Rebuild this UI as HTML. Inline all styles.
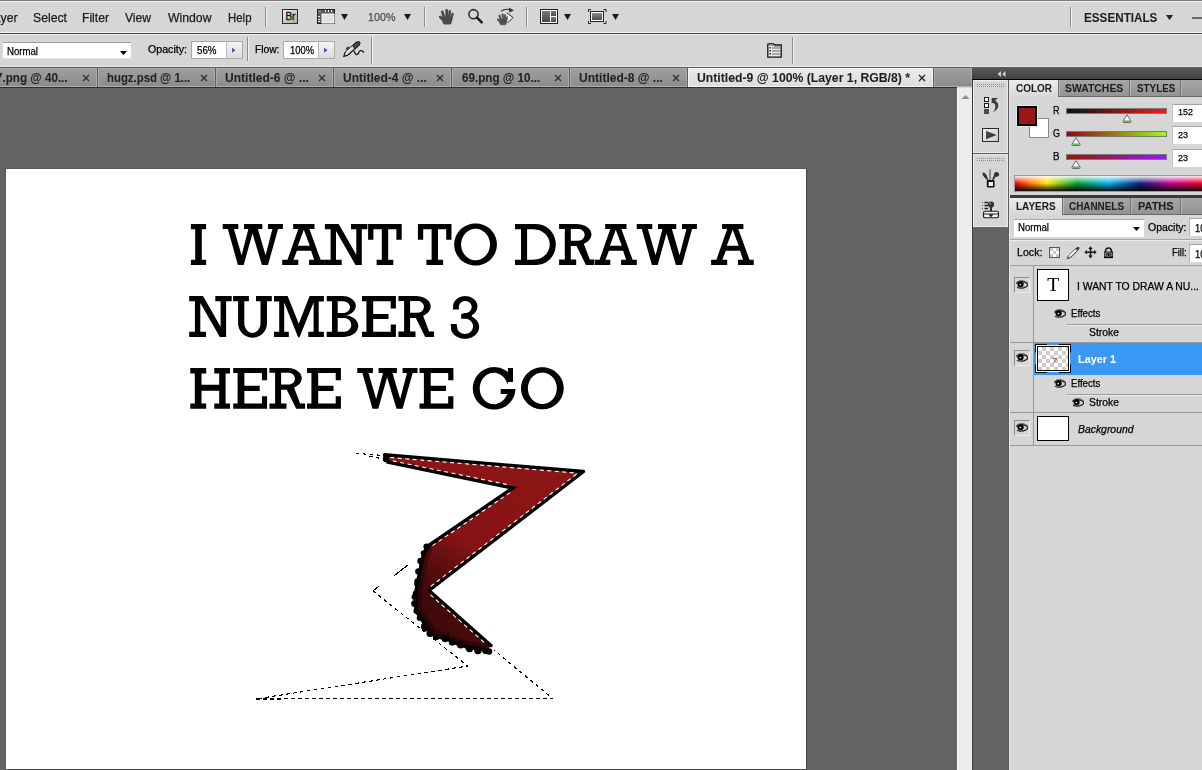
<!DOCTYPE html>
<html><head><meta charset="utf-8"><style>
html,body{margin:0;padding:0;}
body{width:1202px;height:770px;overflow:hidden;position:relative;background:#d6d6d6;}
body>div,body>span,body>svg{position:absolute;}
body>span{white-space:pre;transform-origin:0 0;-webkit-text-stroke:0.25px currentColor;}
body>span.b{-webkit-text-stroke:0.05px currentColor;}
</style></head><body>
<div style="left:0px;top:0px;width:1202px;height:1px;background:#7a7a7a"></div>
<div style="left:0px;top:1px;width:1202px;height:1px;background:#f0f0f0"></div>
<span style="left:-12.867624999999997px;top:11px;font:normal normal 13px/13px 'Liberation Sans', sans-serif;color:#1a1a1a;transform:scaleX(0.9400);">Layer</span>
<span style="left:33.3px;top:11px;font:normal normal 13px/13px 'Liberation Sans', sans-serif;color:#1a1a1a;transform:scaleX(0.9411);">Select</span>
<span style="left:82px;top:11px;font:normal normal 13px/13px 'Liberation Sans', sans-serif;color:#1a1a1a;transform:scaleX(0.9347);">Filter</span>
<span style="left:125px;top:11px;font:normal normal 13px/13px 'Liberation Sans', sans-serif;color:#1a1a1a;transform:scaleX(0.9305);">View</span>
<span style="left:167.5px;top:11px;font:normal normal 13px/13px 'Liberation Sans', sans-serif;color:#1a1a1a;transform:scaleX(0.9409);">Window</span>
<span style="left:227.5px;top:11px;font:normal normal 13px/13px 'Liberation Sans', sans-serif;color:#1a1a1a;transform:scaleX(0.8790);">Help</span>
<div style="left:265px;top:7px;width:1px;height:20px;background:#8c8c8c"></div>
<div style="left:266px;top:7px;width:1px;height:20px;background:#f2f2f2"></div>
<div style="left:424px;top:7px;width:1px;height:20px;background:#8c8c8c"></div>
<div style="left:425px;top:7px;width:1px;height:20px;background:#f2f2f2"></div>
<div style="left:526px;top:7px;width:1px;height:20px;background:#8c8c8c"></div>
<div style="left:527px;top:7px;width:1px;height:20px;background:#f2f2f2"></div>
<div style="left:1070px;top:7px;width:1px;height:20px;background:#8c8c8c"></div>
<div style="left:1071px;top:7px;width:1px;height:20px;background:#f2f2f2"></div>
<span style="left:367.9px;top:12px;font:normal normal 11.5px/11.5px 'Liberation Sans', sans-serif;color:#4d4d4d;transform:scaleX(0.9350);">100%</span>
<span class="b" style="left:1083.6px;top:11px;font:normal bold 13px/13px 'Liberation Sans', sans-serif;color:#1e1e1e;transform:scaleX(0.8993);">ESSENTIALS</span>
<svg style="left:341px;top:14px" width="7" height="6"><path d="M0 0H7L3.5 6Z" fill="#1a1a1a"/></svg>
<svg style="left:404px;top:14px" width="7" height="6"><path d="M0 0H7L3.5 6Z" fill="#1a1a1a"/></svg>
<svg style="left:564px;top:14px" width="7" height="6"><path d="M0 0H7L3.5 6Z" fill="#1a1a1a"/></svg>
<svg style="left:612px;top:14px" width="7" height="6"><path d="M0 0H7L3.5 6Z" fill="#1a1a1a"/></svg>
<svg style="left:1166px;top:15px" width="7" height="5"><path d="M0 0H7L3.5 5Z" fill="#222"/></svg>
<div style="left:1192px;top:17px;width:10px;height:2px;background:#6a6a6a"></div>
<div style="left:0px;top:32px;width:1202px;height:1px;background:#f0f0f0"></div>
<div style="left:0px;top:33px;width:1202px;height:1px;background:#4a4a4a"></div>
<div style="left:0px;top:34px;width:1202px;height:1px;background:#ececec"></div>
<div style="left:0px;top:35px;width:1202px;height:31px;background:#d6d6d6"></div>
<div style="left:3px;top:42px;width:128px;height:17px;background:#fff;border-top:1px solid #9a9a9a;border-bottom:1px solid #e4e4e4;box-sizing:border-box"></div>
<span style="left:6.75px;top:47px;font:normal normal 10px/10px 'Liberation Sans', sans-serif;color:#000;transform:scaleX(0.9620);">Normal</span>
<svg style="left:120px;top:51px" width="7" height="4"><path d="M0 0H7L3.5 4Z" fill="#000"/></svg>
<span style="left:148px;top:45px;font:normal normal 10px/10px 'Liberation Sans', sans-serif;color:#000;transform:scaleX(1.0633);">Opacity:</span>
<div style="left:191px;top:41px;width:52px;height:18px;background:#a9a9a9"></div>
<div style="left:192px;top:42px;width:34px;height:16px;background:#fff"></div>
<div style="left:226px;top:42px;width:16px;height:16px;background:linear-gradient(#f4f4f4,#dcdcdc);border-left:1px solid #b8b8b8;box-sizing:border-box"></div>
<svg style="left:231px;top:47px" width="6" height="7"><path d="M1 0.6L4.6 3.2L1 5.8Z" fill="#4a5ab8"/></svg>
<span style="left:197.1px;top:46px;font:normal normal 10px/10px 'Liberation Sans', sans-serif;color:#000;transform:scaleX(0.9743);">56%</span>
<div style="left:247px;top:37px;width:1px;height:24px;background:#8c8c8c"></div>
<div style="left:248px;top:37px;width:1px;height:24px;background:#f2f2f2"></div>
<span style="left:254.6px;top:45px;font:normal normal 10px/10px 'Liberation Sans', sans-serif;color:#000;transform:scaleX(1.0213);">Flow:</span>
<div style="left:283px;top:41px;width:52px;height:18px;background:#a9a9a9"></div>
<div style="left:284px;top:42px;width:34px;height:16px;background:#fff"></div>
<div style="left:318px;top:42px;width:16px;height:16px;background:linear-gradient(#f4f4f4,#dcdcdc);border-left:1px solid #b8b8b8;box-sizing:border-box"></div>
<svg style="left:323px;top:47px" width="6" height="7"><path d="M1 0.6L4.6 3.2L1 5.8Z" fill="#4a5ab8"/></svg>
<span style="left:289.5px;top:46px;font:normal normal 10px/10px 'Liberation Sans', sans-serif;color:#000;transform:scaleX(0.9384);">100%</span>
<div style="left:371px;top:37px;width:1px;height:27px;background:#8c8c8c"></div>
<div style="left:372px;top:37px;width:1px;height:27px;background:#f2f2f2"></div>
<div style="left:792px;top:37px;width:1px;height:27px;background:#8c8c8c"></div>
<div style="left:793px;top:37px;width:1px;height:27px;background:#f2f2f2"></div>
<div style="left:0px;top:66px;width:972px;height:1px;background:#e8e8e8"></div>
<div style="left:972px;top:66px;width:230px;height:1px;background:#e8e8e8"></div>
<div style="left:0px;top:67px;width:972px;height:1px;background:#5a5a5a"></div>
<div style="left:0px;top:68px;width:972px;height:19px;background:#5a5a5a"></div>
<div style="left:-20px;top:68px;width:117px;height:19px;background:linear-gradient(#9e9e9e,#8c8c8c);border:1px solid #acacac;box-sizing:border-box"></div>
<div style="left:98px;top:68px;width:117px;height:19px;background:linear-gradient(#9e9e9e,#8c8c8c);border:1px solid #acacac;box-sizing:border-box"></div>
<div style="left:216px;top:68px;width:117px;height:19px;background:linear-gradient(#9e9e9e,#8c8c8c);border:1px solid #acacac;box-sizing:border-box"></div>
<div style="left:334px;top:68px;width:117px;height:19px;background:linear-gradient(#9e9e9e,#8c8c8c);border:1px solid #acacac;box-sizing:border-box"></div>
<div style="left:452px;top:68px;width:117px;height:19px;background:linear-gradient(#9e9e9e,#8c8c8c);border:1px solid #acacac;box-sizing:border-box"></div>
<div style="left:570px;top:68px;width:117px;height:19px;background:linear-gradient(#9e9e9e,#8c8c8c);border:1px solid #acacac;box-sizing:border-box"></div>
<div style="left:934px;top:68px;width:38px;height:19px;background:linear-gradient(#9e9e9e,#8c8c8c);border:1px solid #acacac;box-sizing:border-box"></div>
<div style="left:0px;top:87px;width:957px;height:1px;background:#2e2e2e"></div>
<div style="left:0px;top:88px;width:957px;height:682px;background:#646464"></div>
<div style="left:6px;top:169px;width:800px;height:600px;background:#fff;box-shadow:0 0 0 1px rgba(0,0,0,.1),1px 1px 1px rgba(0,0,0,.2)"></div>
<div style="left:957px;top:88px;width:15px;height:682px;background:#ececec;border-left:1px solid #f8f8f8;box-sizing:border-box"></div>
<div style="left:972px;top:79px;width:37px;height:691px;background:#646464"></div>
<div style="left:972px;top:67px;width:230px;height:12px;background:linear-gradient(#5c5c5c,#404040)"></div>
<div style="left:972px;top:79px;width:230px;height:1px;background:#000"></div>
<div style="left:972px;top:80px;width:1px;height:690px;background:#3c3c3c"></div>
<div style="left:973px;top:80px;width:35px;height:73px;background:#d6d6d6;border:1px solid #ececec;box-sizing:border-box"></div>
<div style="left:973px;top:153px;width:35px;height:1px;background:#555"></div>
<div style="left:973px;top:154px;width:35px;height:73px;background:#d6d6d6;border:1px solid #ececec;box-sizing:border-box"></div>
<div style="left:1008px;top:80px;width:1px;height:690px;background:#5c5c5c"></div>
<div style="left:1009px;top:80px;width:193px;height:690px;background:#d6d6d6;border-left:1px solid #e6e6e6;box-sizing:border-box"></div>
<span class="b" style="left:-4.2px;top:72px;font:normal bold 12px/12px 'Liberation Sans', sans-serif;color:#222;transform:scaleX(0.9713);">7.png @ 40...</span>
<svg style="left:82px;top:74px" width="8" height="8"><path d="M1 1L7 7M7 1L1 7" stroke="#2e2e2e" stroke-width="1.25"/></svg>
<span class="b" style="left:107.3px;top:72px;font:normal bold 12px/12px 'Liberation Sans', sans-serif;color:#222;transform:scaleX(0.9487);">hugz.psd @ 1...</span>
<svg style="left:200px;top:74px" width="8" height="8"><path d="M1 1L7 7M7 1L1 7" stroke="#2e2e2e" stroke-width="1.25"/></svg>
<span class="b" style="left:225.3px;top:72px;font:normal bold 12px/12px 'Liberation Sans', sans-serif;color:#222;transform:scaleX(1.0023);">Untitled-6 @ ...</span>
<svg style="left:318px;top:74px" width="8" height="8"><path d="M1 1L7 7M7 1L1 7" stroke="#2e2e2e" stroke-width="1.25"/></svg>
<span class="b" style="left:343.4px;top:72px;font:normal bold 12px/12px 'Liberation Sans', sans-serif;color:#222;transform:scaleX(1.0023);">Untitled-4 @ ...</span>
<svg style="left:436px;top:74px" width="8" height="8"><path d="M1 1L7 7M7 1L1 7" stroke="#2e2e2e" stroke-width="1.25"/></svg>
<span class="b" style="left:461.5px;top:72px;font:normal bold 12px/12px 'Liberation Sans', sans-serif;color:#222;transform:scaleX(0.9728);">69.png @ 10...</span>
<svg style="left:554px;top:74px" width="8" height="8"><path d="M1 1L7 7M7 1L1 7" stroke="#2e2e2e" stroke-width="1.25"/></svg>
<span class="b" style="left:579.3px;top:72px;font:normal bold 12px/12px 'Liberation Sans', sans-serif;color:#222;transform:scaleX(1.0023);">Untitled-8 @ ...</span>
<svg style="left:672px;top:74px" width="8" height="8"><path d="M1 1L7 7M7 1L1 7" stroke="#2e2e2e" stroke-width="1.25"/></svg>
<div style="left:688px;top:68px;width:245px;height:19px;background:linear-gradient(#ebebeb,#dcdcdc);border:1px solid #f6f6f6;box-sizing:border-box"></div>
<span class="b" style="left:697.3px;top:72px;font:normal bold 12px/12px 'Liberation Sans', sans-serif;color:#1e1e1e;transform:scaleX(1.0187);">Untitled-9 @ 100% (Layer 1, RGB/8) *</span>
<svg style="left:918px;top:74px" width="8" height="8"><path d="M1 1L7 7M7 1L1 7" stroke="#1e1e1e" stroke-width="1.25"/></svg>
<svg style="left:282px;top:9px" width="16" height="15"><defs><linearGradient id="gbr" x1="0" y1="0" x2="1" y2="1"><stop offset="0" stop-color="#f0f0f0"/><stop offset="1" stop-color="#a8a8a8"/></linearGradient></defs>
<rect x="0.5" y="0.5" width="15" height="14" fill="url(#gbr)" stroke="#2a2a2a"/>
<text x="3.4" y="11" font-family="Liberation Sans" font-size="10" fill="#111" stroke="#111" stroke-width="0.3">Br</text></svg>
<svg style="left:317px;top:9px" width="18" height="15">
<rect x="0.5" y="0.5" width="17" height="14" fill="#e2e2e2" stroke="#1e1e1e"/>
<rect x="1" y="1" width="16" height="4" fill="#5a5a5a"/><rect x="1" y="1" width="4" height="13" fill="#5a5a5a"/>
<rect x="1" y="1" width="3" height="3" fill="#7a7a7a"/>
<rect x="5" y="5" width="12" height="9" fill="none" stroke="#fafafa" stroke-width="1"/>
<path d="M8.5 1v2M11.5 1v2M14.5 1v2M1 7.5h2M1 10.5h2M1 12.5h2" stroke="#eee" stroke-width="1"/></svg>
<svg style="left:439px;top:9px" width="16" height="16"><g fill="#4a4a4a" stroke="#4a4a4a"><g fill="none" stroke-linecap="round">
<path d="M3.3 2.8L5.2 9" stroke-width="2.6"/><path d="M7.6 1.3L7.8 9" stroke-width="2.7"/>
<path d="M10.8 2.4L10.2 9" stroke-width="2.6"/><path d="M13.6 4.8L12.2 10" stroke-width="2.3"/>
<path d="M1.2 8L4.6 11.2" stroke-width="2.6"/></g>
<path d="M3.6 8H13L12.6 12L11.6 15H5L3.4 12Z"/></g></svg>
<svg style="left:467px;top:8px" width="17" height="17"><circle cx="6.5" cy="6.2" r="4.6" fill="none" stroke="#2e2e2e" stroke-width="1.6"/>
<path d="M10 9.7L14.7 14.4" stroke="#1e1e1e" stroke-width="2.6" stroke-linecap="round"/></svg>
<svg style="left:496px;top:6px" width="19" height="20">
<path d="M11 7L17 11.5L11.5 17" fill="#f4f4f4" stroke="#222" stroke-width="1"/>
<path d="M5 5.2Q10 2 14.5 4.2" fill="none" stroke="#333" stroke-width="1.1"/><path d="M13 1.5L18 4.6L13.2 6.4Z" fill="#333"/>
<g transform="translate(1,7.5) scale(0.75)" fill="#505050" stroke="#505050"><g fill="none" stroke-linecap="round">
<path d="M3.3 2.8L5.2 9" stroke-width="2.6"/><path d="M7.6 1.3L7.8 9" stroke-width="2.7"/>
<path d="M10.8 2.4L10.2 9" stroke-width="2.6"/><path d="M13.6 4.8L12.2 10" stroke-width="2.3"/>
<path d="M1.2 8L4.6 11.2" stroke-width="2.6"/></g>
<path d="M3.6 8H13L12.6 12L11.6 15H5L3.4 12Z"/></g></svg>
<svg style="left:540px;top:9px" width="18" height="15"><defs><linearGradient id="gar" x1="0" y1="0" x2="0" y2="1"><stop offset="0" stop-color="#7a7a7a"/><stop offset="1" stop-color="#4a4a4a"/></linearGradient></defs>
<rect x="0.5" y="0.5" width="17" height="14" fill="#fafafa" stroke="#222"/>
<rect x="2" y="2" width="8" height="11" fill="url(#gar)"/><rect x="11" y="2" width="5" height="5" fill="url(#gar)"/><rect x="11" y="8" width="5" height="5" fill="url(#gar)"/></svg>
<svg style="left:588px;top:9px" width="19" height="15"><defs><linearGradient id="gsm" x1="0" y1="0" x2="0" y2="1"><stop offset="0" stop-color="#8a8a8a"/><stop offset="1" stop-color="#4e4e4e"/></linearGradient></defs>
<path d="M0.5 3V0.5H3M15.5 0.5H18V3M18 12V14.5H15.5M3 14.5H0.5V12" fill="none" stroke="#222" stroke-width="1"/>
<rect x="2.5" y="2.5" width="13" height="10" fill="#fafafa" stroke="#222"/><rect x="4" y="4" width="10" height="7" fill="url(#gsm)"/></svg>
<svg style="left:342px;top:40px" width="24" height="19">
<path d="M1.8 16.4L3 12.6L14.4 2.4L17.2 5L5.8 15.2Z" fill="#d4d4d4" stroke="#111" stroke-width="1.15"/>
<path d="M4 12.8L14.6 3.3" stroke="#fafafa" stroke-width="1.2"/>
<path d="M10.6 6.2L14.4 2.4Q16.4 0.8 17.8 2.2Q18.8 3.5 17.2 5L13.4 8.6Z" fill="#4a4a4a" stroke="#111" stroke-width="1"/>
<path d="M4.6 9.6Q4.8 7.6 7.2 7.4" fill="none" stroke="#333" stroke-width="1.8"/>
<path d="M12 11Q13.5 15 15 14.5Q16.5 14 17 12Q18.5 9.6 21 11.5L22 12.5" fill="none" stroke="#111" stroke-width="1.2"/></svg>
<svg style="left:767px;top:43px" width="15" height="15">
<path d="M0.8 14.2V1.6Q0.8 0.8 1.6 0.8H6.5L7.7 2H14.2V14.2Z" fill="#e8e8e8" stroke="#111" stroke-width="1.3"/>
<path d="M2 2.2H6.3L7.2 3.2H13.4" fill="none" stroke="#777" stroke-width="0.8"/>
<rect x="2.5" y="4" width="1.5" height="1.5" fill="#333"/><rect x="2.5" y="7" width="1.5" height="1.5" fill="#333"/><rect x="2.5" y="10" width="1.5" height="1.5" fill="#333"/>
<path d="M5 5H13M5 8H13M5 11H13" stroke="#666" stroke-width="1"/></svg>
<svg style="left:0;top:0" width="957" height="770"><path fill="#000" fill-rule="evenodd" d="M190.90,224.10 L206.10,224.10 L206.10,229.30 L201.80,229.30 L201.80,259.70 L206.10,259.70 L206.10,264.90 L190.90,264.90 L190.90,259.70 L195.20,259.70 L195.20,229.30 L190.90,229.30 Z M222.70,224.10 L238.30,224.10 L238.30,229.10 L233.90,229.10 L241.60,255.20 L248.40,229.10 L244.00,229.10 L244.00,224.10 L262.30,224.10 L262.30,229.10 L257.90,229.10 L265.60,255.20 L272.40,229.10 L268.00,229.10 L268.00,224.10 L282.90,224.10 L282.90,229.10 L278.10,229.10 L268.00,264.90 L261.90,264.90 L252.50,233.50 L243.70,264.90 L237.90,264.90 L227.80,229.10 L222.70,229.10 Z M293.20,224.10 L314.50,224.10 L314.50,229.00 L309.40,229.00 L320.60,259.70 L324.80,259.70 L324.80,264.90 L309.10,264.90 L309.10,259.70 L314.10,259.70 L311.10,250.80 L296.90,250.80 L293.50,259.70 L298.30,259.70 L298.30,264.90 L282.20,264.90 L282.20,259.70 L287.50,259.70 L298.30,229.00 L293.20,229.00 Z M303.80,229.70 L309.80,245.70 L297.90,245.70 Z M324.90,224.10 L338.70,224.10 L356.30,254.70 L356.30,229.30 L351.00,229.30 L351.00,224.10 L367.40,224.10 L367.40,229.30 L361.80,229.30 L361.80,264.90 L355.50,264.90 L336.00,231.00 L336.00,259.70 L341.70,259.70 L341.70,264.90 L324.90,264.90 L324.90,259.70 L330.60,259.70 L330.60,229.30 L324.90,229.30 Z M368.10,224.10 L401.70,224.10 L401.70,239.80 L396.40,239.80 L396.40,229.20 L388.20,229.20 L388.20,259.70 L393.30,259.70 L393.30,264.90 L376.60,264.90 L376.60,259.70 L381.80,259.70 L381.80,229.20 L373.40,229.20 L373.40,239.80 L368.10,239.80 Z M417.90,224.10 L451.50,224.10 L451.50,239.80 L446.20,239.80 L446.20,229.20 L438.00,229.20 L438.00,259.70 L443.10,259.70 L443.10,264.90 L426.40,264.90 L426.40,259.70 L431.60,259.70 L431.60,229.20 L423.20,229.20 L423.20,239.80 L417.90,239.80 Z M496.90,244.50 L496.82,246.33 L496.58,248.16 L496.17,249.95 L495.61,251.70 L494.90,253.40 L494.04,255.02 L493.04,256.57 L491.91,258.03 L490.65,259.38 L489.27,260.63 L487.80,261.74 L486.23,262.73 L484.57,263.58 L482.85,264.28 L481.08,264.83 L479.26,265.23 L477.41,265.47 L475.55,265.55 L473.69,265.47 L471.84,265.23 L470.02,264.83 L468.25,264.28 L466.53,263.58 L464.88,262.73 L463.30,261.74 L461.83,260.63 L460.45,259.38 L459.19,258.03 L458.06,256.57 L457.06,255.02 L456.20,253.40 L455.49,251.70 L454.93,249.95 L454.52,248.16 L454.28,246.33 L454.20,244.50 L454.28,242.67 L454.52,240.84 L454.93,239.05 L455.49,237.30 L456.20,235.60 L457.06,233.97 L458.06,232.43 L459.19,230.97 L460.45,229.62 L461.83,228.37 L463.30,227.26 L464.88,226.27 L466.53,225.42 L468.25,224.72 L470.02,224.17 L471.84,223.77 L473.69,223.53 L475.55,223.45 L477.41,223.53 L479.26,223.77 L481.08,224.17 L482.85,224.72 L484.57,225.42 L486.23,226.27 L487.80,227.26 L489.27,228.37 L490.65,229.62 L491.91,230.97 L493.04,232.43 L494.04,233.97 L494.90,235.60 L495.61,237.30 L496.17,239.05 L496.58,240.84 L496.82,242.67 Z M490.00,244.50 L489.95,245.87 L489.78,247.23 L489.51,248.56 L489.13,249.87 L488.65,251.14 L488.06,252.35 L487.39,253.51 L486.62,254.59 L485.77,255.60 L484.84,256.53 L483.84,257.36 L482.77,258.10 L481.66,258.73 L480.49,259.25 L479.29,259.67 L478.06,259.96 L476.81,260.14 L475.55,260.20 L474.29,260.14 L473.04,259.96 L471.81,259.67 L470.61,259.25 L469.44,258.73 L468.32,258.10 L467.26,257.36 L466.26,256.53 L465.33,255.60 L464.48,254.59 L463.71,253.51 L463.04,252.35 L462.45,251.14 L461.97,249.87 L461.59,248.56 L461.32,247.23 L461.15,245.87 L461.10,244.50 L461.15,243.13 L461.32,241.77 L461.59,240.44 L461.97,239.13 L462.45,237.86 L463.04,236.65 L463.71,235.49 L464.48,234.41 L465.33,233.40 L466.26,232.47 L467.26,231.64 L468.32,230.90 L469.44,230.27 L470.61,229.75 L471.81,229.33 L473.04,229.04 L474.29,228.86 L475.55,228.80 L476.81,228.86 L478.06,229.04 L479.29,229.33 L480.49,229.75 L481.66,230.27 L482.77,230.90 L483.84,231.64 L484.84,232.47 L485.77,233.40 L486.62,234.41 L487.39,235.49 L488.06,236.65 L488.65,237.86 L489.13,239.13 L489.51,240.44 L489.78,241.77 L489.95,243.13 Z M515.00,224.10 L536.30,224.10 L538.34,224.21 L540.35,224.55 L542.33,225.10 L544.23,225.86 L546.05,226.83 L547.76,228.00 L549.35,229.34 L550.79,230.85 L552.08,232.51 L553.19,234.30 L554.11,236.20 L554.85,238.20 L555.37,240.26 L555.69,242.37 L555.80,244.50 L555.69,246.63 L555.37,248.74 L554.85,250.80 L554.11,252.80 L553.19,254.70 L552.08,256.49 L550.79,258.15 L549.35,259.66 L547.76,261.00 L546.05,262.17 L544.23,263.14 L542.33,263.90 L540.35,264.45 L538.34,264.79 L536.30,264.90 L515.00,264.90 L515.00,259.70 L521.00,259.70 L521.00,229.30 L515.00,229.30 Z M527.10,229.30 L533.30,229.30 L535.01,229.38 L536.71,229.63 L538.37,230.04 L539.97,230.61 L541.50,231.34 L542.94,232.20 L544.27,233.20 L545.49,234.33 L546.57,235.57 L547.50,236.90 L548.28,238.32 L548.90,239.80 L549.34,241.34 L549.61,242.91 L549.70,244.50 L549.61,246.09 L549.34,247.66 L548.90,249.20 L548.28,250.68 L547.50,252.10 L546.57,253.43 L545.49,254.67 L544.27,255.80 L542.94,256.80 L541.50,257.66 L539.97,258.39 L538.37,258.96 L536.71,259.37 L535.01,259.62 L533.30,259.70 L527.10,259.70 Z M559.10,224.10 L577.10,224.10 L578.97,224.19 L580.80,224.45 L582.57,224.89 L584.25,225.49 L585.81,226.25 L587.21,227.15 L588.44,228.17 L589.48,229.30 L590.31,230.52 L590.91,231.81 L591.28,233.14 L591.40,234.50 L591.27,235.90 L590.88,237.28 L590.24,238.61 L589.36,239.86 L588.25,241.01 L586.94,242.04 L585.45,242.94 L583.81,243.68 L589.80,259.60 L594.80,259.60 L594.80,264.90 L585.90,264.90 L576.50,245.90 L570.80,245.90 L570.80,259.60 L576.20,259.60 L576.20,264.90 L559.10,264.90 L559.10,259.60 L564.80,259.60 L564.80,229.00 L559.10,229.00 Z M570.80,229.00 L578.40,229.00 L579.61,229.11 L580.77,229.45 L581.84,229.99 L582.78,230.71 L583.56,231.60 L584.13,232.61 L584.48,233.71 L584.60,234.85 L584.48,235.99 L584.13,237.09 L583.56,238.10 L582.78,238.99 L581.84,239.71 L580.77,240.25 L579.61,240.59 L578.40,240.70 L570.80,240.70 Z M605.20,224.10 L626.50,224.10 L626.50,229.00 L621.40,229.00 L632.60,259.70 L636.80,259.70 L636.80,264.90 L621.10,264.90 L621.10,259.70 L626.10,259.70 L623.10,250.80 L608.90,250.80 L605.50,259.70 L610.30,259.70 L610.30,264.90 L594.20,264.90 L594.20,259.70 L599.50,259.70 L610.30,229.00 L605.20,229.00 Z M615.80,229.70 L621.80,245.70 L609.90,245.70 Z M636.70,224.10 L652.30,224.10 L652.30,229.10 L647.90,229.10 L655.60,255.20 L662.40,229.10 L658.00,229.10 L658.00,224.10 L676.30,224.10 L676.30,229.10 L671.90,229.10 L679.60,255.20 L686.40,229.10 L682.00,229.10 L682.00,224.10 L696.90,224.10 L696.90,229.10 L692.10,229.10 L682.00,264.90 L675.90,264.90 L666.50,233.50 L657.70,264.90 L651.90,264.90 L641.80,229.10 L636.70,229.10 Z M722.10,224.10 L743.40,224.10 L743.40,229.00 L738.30,229.00 L749.50,259.70 L753.70,259.70 L753.70,264.90 L738.00,264.90 L738.00,259.70 L743.00,259.70 L740.00,250.80 L725.80,250.80 L722.40,259.70 L727.20,259.70 L727.20,264.90 L711.10,264.90 L711.10,259.70 L716.40,259.70 L727.20,229.00 L722.10,229.00 Z M732.70,229.70 L738.70,245.70 L726.80,245.70 Z M189.20,296.10 L203.00,296.10 L220.60,326.70 L220.60,301.30 L215.30,301.30 L215.30,296.10 L231.70,296.10 L231.70,301.30 L226.10,301.30 L226.10,336.90 L219.80,336.90 L200.30,303.00 L200.30,331.70 L206.00,331.70 L206.00,336.90 L189.20,336.90 L189.20,331.70 L194.90,331.70 L194.90,301.30 L189.20,301.30 Z M233.10,296.10 L248.90,296.10 L248.90,301.30 L244.30,301.30 L244.30,323.10 L244.40,324.63 L244.70,326.13 L245.18,327.55 L245.85,328.86 L246.67,330.03 L247.64,331.03 L248.72,331.83 L249.90,332.42 L251.13,332.78 L252.40,332.90 L253.67,332.78 L254.90,332.42 L256.08,331.83 L257.16,331.03 L258.13,330.03 L258.95,328.86 L259.62,327.55 L260.10,326.13 L260.40,324.63 L260.50,323.10 L260.50,301.30 L256.00,301.30 L256.00,296.10 L271.80,296.10 L271.80,301.30 L267.00,301.30 L267.00,323.10 L266.88,325.01 L266.51,326.88 L265.90,328.69 L265.06,330.40 L264.01,331.99 L262.77,333.42 L261.35,334.68 L259.77,335.74 L258.08,336.59 L256.29,337.20 L254.44,337.58 L252.55,337.70 L250.66,337.58 L248.81,337.20 L247.02,336.59 L245.32,335.74 L243.75,334.68 L242.33,333.42 L241.09,331.99 L240.04,330.40 L239.20,328.69 L238.59,326.88 L238.22,325.01 L238.10,323.10 L238.10,301.30 L233.10,301.30 Z M274.00,296.10 L287.60,296.10 L298.80,323.80 L309.60,296.10 L323.90,296.10 L323.90,301.60 L318.70,301.60 L318.70,331.70 L323.90,331.70 L323.90,336.90 L308.30,336.90 L308.30,331.70 L313.60,331.70 L313.60,302.60 L299.50,337.30 L298.10,337.30 L284.20,302.60 L284.20,331.70 L288.80,331.70 L288.80,336.90 L274.00,336.90 L274.00,331.70 L279.20,331.70 L279.20,301.60 L274.00,301.60 Z M326.70,296.10 L342.90,296.10 L344.92,296.22 L346.89,296.58 L348.76,297.17 L350.48,297.97 L352.02,298.97 L353.34,300.14 L354.39,301.45 L355.17,302.87 L355.64,304.37 L355.80,305.90 L355.64,307.43 L355.17,308.93 L354.39,310.35 L353.34,311.66 L352.02,312.83 L350.48,313.83 L348.76,314.63 L346.89,315.22 L344.92,315.58 L345.98,315.23 L348.21,315.63 L350.33,316.29 L352.28,317.18 L354.02,318.29 L355.51,319.59 L356.71,321.05 L357.59,322.63 L358.12,324.29 L358.30,326.00 L358.12,327.71 L357.59,329.37 L356.71,330.95 L355.51,332.41 L354.02,333.71 L352.28,334.82 L350.33,335.71 L348.21,336.37 L345.98,336.77 L343.70,336.90 L326.70,336.90 L326.70,331.70 L332.00,331.70 L332.00,301.30 L326.70,301.30 Z M337.70,301.30 L343.20,301.30 L344.53,301.41 L345.80,301.75 L346.98,302.29 L348.01,303.01 L348.85,303.90 L349.48,304.91 L349.87,306.01 L350.00,307.15 L349.87,308.29 L349.48,309.39 L348.85,310.40 L348.01,311.29 L346.98,312.01 L345.80,312.55 L344.53,312.89 L343.20,313.00 L337.70,313.00 Z M337.70,318.00 L344.20,318.00 L345.57,318.13 L346.88,318.52 L348.09,319.15 L349.15,320.01 L350.02,321.04 L350.67,322.23 L351.07,323.51 L351.20,324.85 L351.07,326.19 L350.67,327.47 L350.02,328.66 L349.15,329.69 L348.09,330.55 L346.88,331.18 L345.57,331.57 L344.20,331.70 L337.70,331.70 Z M362.00,296.10 L395.90,296.10 L395.90,308.50 L390.70,308.50 L390.70,301.30 L373.20,301.30 L373.20,313.90 L388.50,313.90 L388.50,319.10 L373.20,319.10 L373.20,331.70 L390.70,331.70 L390.70,324.50 L395.90,324.50 L395.90,336.90 L362.00,336.90 L362.00,331.70 L366.40,331.70 L366.40,301.30 L362.00,301.30 Z M398.40,296.10 L416.40,296.10 L418.27,296.19 L420.10,296.45 L421.87,296.89 L423.55,297.49 L425.11,298.25 L426.51,299.15 L427.74,300.17 L428.78,301.30 L429.61,302.52 L430.21,303.81 L430.58,305.14 L430.70,306.50 L430.57,307.90 L430.18,309.28 L429.54,310.61 L428.66,311.86 L427.55,313.01 L426.24,314.04 L424.75,314.94 L423.11,315.68 L429.10,331.60 L434.10,331.60 L434.10,336.90 L425.20,336.90 L415.80,317.90 L410.10,317.90 L410.10,331.60 L415.50,331.60 L415.50,336.90 L398.40,336.90 L398.40,331.60 L404.10,331.60 L404.10,301.00 L398.40,301.00 Z M410.10,301.00 L417.70,301.00 L418.91,301.11 L420.07,301.45 L421.14,301.99 L422.08,302.71 L422.86,303.60 L423.43,304.61 L423.78,305.71 L423.90,306.85 L423.78,307.99 L423.43,309.09 L422.86,310.10 L422.08,310.99 L421.14,311.71 L420.07,312.25 L418.91,312.59 L417.70,312.70 L410.10,312.70 Z M453.00,309.60 L453.06,306.75 L453.08,305.65 L453.24,304.57 L453.54,303.51 L453.97,302.48 L454.52,301.49 L455.20,300.56 L455.99,299.70 L456.88,298.91 L457.87,298.20 L458.93,297.59 L460.07,297.07 L461.27,296.66 L462.52,296.36 L463.79,296.17 L465.08,296.10 L466.37,296.14 L467.65,296.30 L468.90,296.57 L470.11,296.95 L471.27,297.44 L472.36,298.03 L473.37,298.71 L474.29,299.48 L475.10,300.33 L475.81,301.24 L476.40,302.21 L476.86,303.23 L477.19,304.29 L477.39,305.37 L477.45,306.46 L477.37,307.55 L477.16,308.62 L476.82,309.68 L476.34,310.69 L475.74,311.66 L475.02,312.57 L474.19,313.40 L473.27,314.16 L472.25,314.84 L471.57,316.58 L472.67,317.12 L473.70,317.74 L474.67,318.44 L475.56,319.20 L476.36,320.03 L477.07,320.91 L477.68,321.85 L478.18,322.82 L478.58,323.83 L478.87,324.87 L479.04,325.92 L479.10,326.98 L479.04,328.04 L478.87,329.10 L478.59,330.13 L478.20,331.14 L477.69,332.12 L477.09,333.05 L476.38,333.94 L475.59,334.77 L474.70,335.54 L473.74,336.23 L472.70,336.86 L471.61,337.40 L470.45,337.86 L469.26,338.23 L468.02,338.51 L466.76,338.70 L465.49,338.79 L464.21,338.79 L462.94,338.69 L461.68,338.49 L460.45,338.21 L459.26,337.83 L458.11,337.36 L457.02,336.81 L455.99,336.19 L455.03,335.48 L454.15,334.71 L453.36,333.88 L452.66,332.98 L452.06,332.05 L451.57,331.07 L451.18,330.05 L450.70,324.10 L456.60,324.10 L457.64,329.66 L458.07,330.38 L458.58,331.06 L459.17,331.67 L459.83,332.23 L460.55,332.71 L461.32,333.12 L462.13,333.44 L462.97,333.68 L463.84,333.83 L464.72,333.90 L465.61,333.87 L466.48,333.75 L467.34,333.55 L468.16,333.26 L468.95,332.88 L469.69,332.43 L470.37,331.90 L470.99,331.31 L471.54,330.66 L472.00,329.96 L472.38,329.21 L472.68,328.43 L472.88,327.62 L472.98,326.80 L472.99,325.97 L472.91,325.14 L472.72,324.33 L472.45,323.55 L472.08,322.79 L471.63,322.08 L471.10,321.41 L470.50,320.81 L469.83,320.27 L469.10,319.80 L468.32,319.41 L467.50,319.10 L466.65,318.88 L465.78,318.75 L464.90,318.70 L461.20,318.70 L461.20,314.00 L464.92,312.99 L465.70,312.99 L466.47,312.89 L467.23,312.71 L467.95,312.44 L468.64,312.09 L469.28,311.66 L469.85,311.17 L470.36,310.61 L470.79,310.00 L471.14,309.34 L471.40,308.65 L471.57,307.94 L471.65,307.21 L471.63,306.48 L471.51,305.75 L471.30,305.05 L471.00,304.37 L470.62,303.73 L470.15,303.14 L469.61,302.61 L469.01,302.15 L468.35,301.75 L467.65,301.44 L466.91,301.20 L466.14,301.06 L465.36,301.00 L464.58,301.03 L463.81,301.15 L463.06,301.36 L462.34,301.65 L461.67,302.03 L461.05,302.47 L460.49,302.99 L460.01,303.56 L459.60,304.18 L459.28,304.85 L459.04,305.55 L458.90,306.27 L458.85,307.00 L458.90,309.60 Z M190.30,367.90 L206.20,367.90 L206.20,373.40 L201.50,373.40 L201.50,384.70 L219.20,384.70 L219.20,373.40 L214.30,373.40 L214.30,367.90 L230.00,367.90 L230.00,373.40 L225.60,373.40 L225.60,403.50 L230.00,403.50 L230.00,408.70 L214.30,408.70 L214.30,403.50 L219.20,403.50 L219.20,390.70 L201.50,390.70 L201.50,403.50 L206.20,403.50 L206.20,408.70 L190.30,408.70 L190.30,403.50 L194.80,403.50 L194.80,373.40 L190.30,373.40 Z M233.20,367.90 L267.10,367.90 L267.10,380.30 L261.90,380.30 L261.90,373.10 L244.40,373.10 L244.40,385.70 L259.70,385.70 L259.70,390.90 L244.40,390.90 L244.40,403.50 L261.90,403.50 L261.90,396.30 L267.10,396.30 L267.10,408.70 L233.20,408.70 L233.20,403.50 L237.60,403.50 L237.60,373.10 L233.20,373.10 Z M269.40,367.90 L287.40,367.90 L289.27,367.99 L291.10,368.25 L292.87,368.69 L294.55,369.29 L296.11,370.05 L297.51,370.95 L298.74,371.97 L299.78,373.10 L300.61,374.32 L301.21,375.61 L301.58,376.94 L301.70,378.30 L301.57,379.70 L301.18,381.08 L300.54,382.41 L299.66,383.66 L298.55,384.81 L297.24,385.84 L295.75,386.74 L294.11,387.48 L300.10,403.40 L305.10,403.40 L305.10,408.70 L296.20,408.70 L286.80,389.70 L281.10,389.70 L281.10,403.40 L286.50,403.40 L286.50,408.70 L269.40,408.70 L269.40,403.40 L275.10,403.40 L275.10,372.80 L269.40,372.80 Z M281.10,372.80 L288.70,372.80 L289.91,372.91 L291.07,373.25 L292.14,373.79 L293.08,374.51 L293.86,375.40 L294.43,376.41 L294.78,377.51 L294.90,378.65 L294.78,379.79 L294.43,380.89 L293.86,381.90 L293.08,382.79 L292.14,383.51 L291.07,384.05 L289.91,384.39 L288.70,384.50 L281.10,384.50 Z M307.00,367.90 L340.90,367.90 L340.90,380.30 L335.70,380.30 L335.70,373.10 L318.20,373.10 L318.20,385.70 L333.50,385.70 L333.50,390.90 L318.20,390.90 L318.20,403.50 L335.70,403.50 L335.70,396.30 L340.90,396.30 L340.90,408.70 L307.00,408.70 L307.00,403.50 L311.40,403.50 L311.40,373.10 L307.00,373.10 Z M357.30,367.90 L372.90,367.90 L372.90,372.90 L368.50,372.90 L376.20,399.00 L383.00,372.90 L378.60,372.90 L378.60,367.90 L396.90,367.90 L396.90,372.90 L392.50,372.90 L400.20,399.00 L407.00,372.90 L402.60,372.90 L402.60,367.90 L417.50,367.90 L417.50,372.90 L412.70,372.90 L402.60,408.70 L396.50,408.70 L387.10,377.30 L378.30,408.70 L372.50,408.70 L362.40,372.90 L357.30,372.90 Z M419.50,367.90 L453.40,367.90 L453.40,380.30 L448.20,380.30 L448.20,373.10 L430.70,373.10 L430.70,385.70 L446.00,385.70 L446.00,390.90 L430.70,390.90 L430.70,403.50 L448.20,403.50 L448.20,396.30 L453.40,396.30 L453.40,408.70 L419.50,408.70 L419.50,403.50 L423.90,403.50 L423.90,373.10 L419.50,373.10 Z M507.90,372.09 L506.45,370.98 L504.91,370.00 L503.29,369.15 L501.60,368.44 L499.86,367.87 L498.08,367.46 L496.26,367.20 L494.44,367.10 L492.60,367.16 L490.79,367.37 L488.99,367.73 L487.24,368.25 L485.53,368.91 L483.89,369.72 L482.32,370.66 L480.84,371.73 L479.46,372.93 L478.19,374.24 L477.03,375.65 L476.00,377.16 L475.10,378.75 L474.35,380.41 L473.74,382.13 L473.28,383.89 L472.97,385.69 L472.82,387.50 L472.82,389.33 L472.99,391.14 L473.30,392.94 L473.78,394.70 L474.40,396.41 L475.16,398.07 L476.07,399.65 L477.11,401.15 L478.27,402.56 L479.56,403.86 L480.95,405.05 L482.43,406.11 L484.00,407.05 L485.65,407.84 L487.36,408.50 L489.12,409.00 L490.92,409.35 L492.74,409.55 L494.57,409.60 L496.40,409.48 L498.21,409.21 L499.99,408.79 L501.73,408.22 L503.41,407.50 L505.02,406.64 L506.56,405.64 L508.00,404.52 L509.34,403.28 L510.57,401.93 L511.68,400.48 L512.66,398.94 L513.50,397.32 L514.21,395.64 L514.76,393.90 L515.50,389.00 L500.70,389.00 L500.70,394.10 L507.80,394.10 L506.52,395.17 L505.90,396.48 L505.17,397.72 L504.34,398.89 L503.41,399.95 L502.40,400.92 L501.31,401.77 L500.15,402.51 L498.94,403.11 L497.68,403.59 L496.38,403.93 L495.06,404.14 L493.73,404.20 L492.40,404.12 L491.09,403.90 L489.79,403.55 L488.54,403.06 L487.33,402.44 L486.18,401.69 L485.10,400.82 L484.09,399.85 L483.17,398.77 L482.35,397.60 L481.63,396.35 L481.02,395.03 L480.53,393.65 L480.15,392.22 L479.90,390.76 L479.77,389.28 L479.76,387.79 L479.89,386.31 L480.13,384.85 L480.50,383.42 L480.99,382.04 L481.60,380.72 L482.31,379.46 L483.13,378.29 L484.04,377.20 L485.04,376.22 L486.12,375.35 L487.27,374.60 L488.48,373.97 L489.73,373.47 L491.02,373.11 L492.34,372.89 L493.66,372.80 L494.99,372.86 L496.31,373.05 L497.61,373.39 L498.87,373.86 L500.09,374.46 L501.25,375.19 L502.34,376.04 L503.36,377.00 L504.29,378.06 L505.13,379.21 L505.86,380.45 L506.49,381.77 L507.01,383.14 L507.40,384.56 L507.90,381.90 L513.00,381.90 L513.00,368.00 L507.90,368.00 Z M563.70,388.30 L563.62,390.13 L563.38,391.96 L562.97,393.75 L562.41,395.50 L561.70,397.20 L560.84,398.82 L559.84,400.37 L558.71,401.83 L557.45,403.18 L556.07,404.43 L554.60,405.54 L553.02,406.53 L551.37,407.38 L549.65,408.08 L547.88,408.63 L546.06,409.03 L544.21,409.27 L542.35,409.35 L540.49,409.27 L538.64,409.03 L536.82,408.63 L535.05,408.08 L533.33,407.38 L531.67,406.53 L530.10,405.54 L528.63,404.43 L527.25,403.18 L525.99,401.83 L524.86,400.37 L523.86,398.82 L523.00,397.20 L522.29,395.50 L521.73,393.75 L521.32,391.96 L521.08,390.13 L521.00,388.30 L521.08,386.47 L521.32,384.64 L521.73,382.85 L522.29,381.10 L523.00,379.40 L523.86,377.77 L524.86,376.23 L525.99,374.77 L527.25,373.42 L528.63,372.17 L530.10,371.06 L531.67,370.07 L533.33,369.22 L535.05,368.52 L536.82,367.97 L538.64,367.57 L540.49,367.33 L542.35,367.25 L544.21,367.33 L546.06,367.57 L547.88,367.97 L549.65,368.52 L551.37,369.22 L553.02,370.07 L554.60,371.06 L556.07,372.17 L557.45,373.42 L558.71,374.77 L559.84,376.23 L560.84,377.77 L561.70,379.40 L562.41,381.10 L562.97,382.85 L563.38,384.64 L563.62,386.47 Z M556.80,388.30 L556.75,389.67 L556.58,391.03 L556.31,392.36 L555.93,393.67 L555.45,394.94 L554.86,396.15 L554.19,397.31 L553.42,398.39 L552.57,399.40 L551.64,400.33 L550.64,401.16 L549.58,401.90 L548.46,402.53 L547.29,403.05 L546.09,403.47 L544.86,403.76 L543.61,403.94 L542.35,404.00 L541.09,403.94 L539.84,403.76 L538.61,403.47 L537.41,403.05 L536.24,402.53 L535.12,401.90 L534.06,401.16 L533.06,400.33 L532.13,399.40 L531.28,398.39 L530.51,397.31 L529.84,396.15 L529.25,394.94 L528.77,393.67 L528.39,392.36 L528.12,391.03 L527.95,389.67 L527.90,388.30 L527.95,386.93 L528.12,385.57 L528.39,384.24 L528.77,382.93 L529.25,381.66 L529.84,380.45 L530.51,379.29 L531.28,378.21 L532.13,377.20 L533.06,376.27 L534.06,375.44 L535.12,374.70 L536.24,374.07 L537.41,373.55 L538.61,373.13 L539.84,372.84 L541.09,372.66 L542.35,372.60 L543.61,372.66 L544.86,372.84 L546.09,373.13 L547.29,373.55 L548.46,374.07 L549.58,374.70 L550.64,375.44 L551.64,376.27 L552.57,377.20 L553.42,378.21 L554.19,379.29 L554.86,380.45 L555.45,381.66 L555.93,382.93 L556.31,384.24 L556.58,385.57 L556.75,386.93 Z"/></svg>
<svg style="left:0;top:0" width="957" height="770">
<defs><linearGradient id="gred" x1="470" y1="470" x2="430" y2="650" gradientUnits="userSpaceOnUse">
<stop offset="0" stop-color="#8c1515"/><stop offset="0.4" stop-color="#861414"/><stop offset="0.58" stop-color="#6e1111"/><stop offset="0.75" stop-color="#4e0c0c"/><stop offset="1" stop-color="#420a0a"/></linearGradient>
<radialGradient id="gdark" cx="420" cy="590" r="70" gradientUnits="userSpaceOnUse"><stop offset="0" stop-color="#2a0505" stop-opacity="0.55"/><stop offset="1" stop-color="#2a0505" stop-opacity="0"/></radialGradient></defs>
<path d="M384.5,454.8 L583.5,471.5 L429.0,590.5 L491.0,645.0 L488.0,650.0 L486.0,650.0 L479.0,649.0 L470.0,647.5 L461.0,645.0 L453.0,642.0 L446.0,638.5 L438.0,637.0 L431.0,633.0 L426.0,626.0 L421.0,618.0 L416.0,611.0 L415.5,602.0 L416.0,592.0 L417.5,582.0 L420.0,572.0 L421.5,562.0 L424.0,553.0 L428.0,546.0 L513.0,487.5 L387.0,461.5Z" fill="url(#gred)"/>
<path d="M384.5,454.8 L583.5,471.5 L429.0,590.5 L491.0,645.0 L488.0,650.0 L486.0,650.0 L479.0,649.0 L470.0,647.5 L461.0,645.0 L453.0,642.0 L446.0,638.5 L438.0,637.0 L431.0,633.0 L426.0,626.0 L421.0,618.0 L416.0,611.0 L415.5,602.0 L416.0,592.0 L417.5,582.0 L420.0,572.0 L421.5,562.0 L424.0,553.0 L428.0,546.0 L513.0,487.5 L387.0,461.5Z" fill="url(#gdark)"/>
<clipPath id="cshape"><path d="M384.5,454.8 L583.5,471.5 L429.0,590.5 L491.0,645.0 L488.0,650.0 L486.0,650.0 L479.0,649.0 L470.0,647.5 L461.0,645.0 L453.0,642.0 L446.0,638.5 L438.0,637.0 L431.0,633.0 L426.0,626.0 L421.0,618.0 L416.0,611.0 L415.5,602.0 L416.0,592.0 L417.5,582.0 L420.0,572.0 L421.5,562.0 L424.0,553.0 L428.0,546.0 L513.0,487.5 L387.0,461.5Z"/></clipPath>
<path d="M428.0,546.0 L424.0,553.0 L421.5,562.0 L420.0,572.0 L417.5,582.0 L416.0,592.0 L415.5,602.0 L416.0,611.0 L421.0,618.0 L426.0,626.0 L431.0,633.0 L438.0,637.0 L446.0,638.5 L453.0,642.0 L461.0,645.0 L470.0,647.5 L479.0,649.0 L486.0,650.0" fill="none" stroke="#1a0303" stroke-opacity="0.45" stroke-width="12" clip-path="url(#cshape)"/>
<path d="M386 458.5L384.5 454.8L583.5 471.5L429 590.5L491 645.5" fill="none" stroke="#000" stroke-width="3.4" stroke-linejoin="round" stroke-linecap="round"/>
<path d="M386.5 461.8L513 488L428 546" fill="none" stroke="#000" stroke-width="3.6" stroke-linejoin="miter"/>
<path d="M428.0,546.0 L424.0,553.0 L421.5,562.0 L420.0,572.0 L417.5,582.0 L416.0,592.0 L415.5,602.0 L416.0,611.0 L421.0,618.0 L426.0,626.0 L431.0,633.0 L438.0,637.0 L446.0,638.5 L453.0,642.0 L461.0,645.0 L470.0,647.5 L479.0,649.0 L486.0,650.0" fill="none" stroke="#000" stroke-width="3.6" stroke-linejoin="round"/>
<g fill="#060000"><circle cx="426.6" cy="546.7" r="3.2"/><circle cx="423.5" cy="553.1" r="2.8"/><circle cx="420.9" cy="561.4" r="2.8"/><circle cx="418.5" cy="571.5" r="3.3"/><circle cx="417.6" cy="581.6" r="3.3"/><circle cx="415.7" cy="593.4" r="3.0"/><circle cx="414.7" cy="603.4" r="3.5"/><circle cx="416.2" cy="610.9" r="2.8"/><circle cx="419.6" cy="618.0" r="2.9"/><circle cx="424.7" cy="626.6" r="3.8"/><circle cx="430.1" cy="633.5" r="3.6"/><circle cx="436.4" cy="636.8" r="2.8"/><circle cx="445.2" cy="638.5" r="3.7"/><circle cx="452.3" cy="642.0" r="3.5"/><circle cx="460.8" cy="644.8" r="3.8"/><circle cx="469.5" cy="648.7" r="3.5"/><circle cx="477.9" cy="650.5" r="3.7"/><circle cx="485.2" cy="651.0" r="2.9"/><circle cx="489" cy="651.5" r="3.3"/><circle cx="386" cy="459" r="3.2"/><circle cx="420.5" cy="561" r="3.2"/><circle cx="425.5" cy="628" r="3.4"/><circle cx="414.5" cy="597" r="3"/><circle cx="436" cy="637" r="3.2"/><circle cx="452" cy="642.5" r="3"/><circle cx="468" cy="647" r="3.1"/><circle cx="417" cy="584" r="2.8"/></g>
<g fill="none" stroke="#fff" stroke-width="1.1" stroke-dasharray="4 3.5">
<path d="M390.3 457.5L575.3 473.0"/><path d="M576.6 474.0L430.8 586.3"/><path d="M430.5 594.8L485.8 643.8"/><path d="M392.8 460.9L508.6 484.8"/><path d="M510.1 492.6L430.9 546.7"/>
</g>
<g fill="none" stroke="#000" stroke-width="1.1" stroke-dasharray="3.5 3.5" shape-rendering="crispEdges">
<path d="M356 453.3L383 455.5"/><path d="M369 456.5L383 458.7"/>
<path d="M373 591L467.7 666L255.6 699L552.6 698.5L494 650"/>
</g>
<g fill="none" stroke="#000" stroke-width="1.1" shape-rendering="crispEdges"><path d="M394.2 575.6L407.8 565.1"/><path d="M379 586.1L373 591"/></g>
</svg>
<svg style="left:977px;top:84px" width="28" height="3"><g fill="#8a8a8a"><rect x="0" y="0" width="1" height="1"/><rect x="0" y="2" width="1" height="1"/><rect x="2" y="0" width="1" height="1"/><rect x="2" y="2" width="1" height="1"/><rect x="4" y="0" width="1" height="1"/><rect x="4" y="2" width="1" height="1"/><rect x="6" y="0" width="1" height="1"/><rect x="6" y="2" width="1" height="1"/><rect x="8" y="0" width="1" height="1"/><rect x="8" y="2" width="1" height="1"/><rect x="10" y="0" width="1" height="1"/><rect x="10" y="2" width="1" height="1"/><rect x="12" y="0" width="1" height="1"/><rect x="12" y="2" width="1" height="1"/><rect x="14" y="0" width="1" height="1"/><rect x="14" y="2" width="1" height="1"/><rect x="16" y="0" width="1" height="1"/><rect x="16" y="2" width="1" height="1"/><rect x="18" y="0" width="1" height="1"/><rect x="18" y="2" width="1" height="1"/><rect x="20" y="0" width="1" height="1"/><rect x="20" y="2" width="1" height="1"/><rect x="22" y="0" width="1" height="1"/><rect x="22" y="2" width="1" height="1"/><rect x="24" y="0" width="1" height="1"/><rect x="24" y="2" width="1" height="1"/><rect x="26" y="0" width="1" height="1"/><rect x="26" y="2" width="1" height="1"/></g></svg>
<svg style="left:977px;top:158px" width="28" height="3"><g fill="#8a8a8a"><rect x="0" y="0" width="1" height="1"/><rect x="0" y="2" width="1" height="1"/><rect x="2" y="0" width="1" height="1"/><rect x="2" y="2" width="1" height="1"/><rect x="4" y="0" width="1" height="1"/><rect x="4" y="2" width="1" height="1"/><rect x="6" y="0" width="1" height="1"/><rect x="6" y="2" width="1" height="1"/><rect x="8" y="0" width="1" height="1"/><rect x="8" y="2" width="1" height="1"/><rect x="10" y="0" width="1" height="1"/><rect x="10" y="2" width="1" height="1"/><rect x="12" y="0" width="1" height="1"/><rect x="12" y="2" width="1" height="1"/><rect x="14" y="0" width="1" height="1"/><rect x="14" y="2" width="1" height="1"/><rect x="16" y="0" width="1" height="1"/><rect x="16" y="2" width="1" height="1"/><rect x="18" y="0" width="1" height="1"/><rect x="18" y="2" width="1" height="1"/><rect x="20" y="0" width="1" height="1"/><rect x="20" y="2" width="1" height="1"/><rect x="22" y="0" width="1" height="1"/><rect x="22" y="2" width="1" height="1"/><rect x="24" y="0" width="1" height="1"/><rect x="24" y="2" width="1" height="1"/><rect x="26" y="0" width="1" height="1"/><rect x="26" y="2" width="1" height="1"/></g></svg>
<svg style="left:961px;top:94px" width="9" height="6"><path d="M0.5 5L4.5 1L8.5 5Z" fill="#8c8c8c"/></svg>
<svg style="left:997px;top:71px" width="9" height="6"><path d="M4 0V6L0.5 3Z M8.5 0V6L5 3Z" fill="#cfcfcf"/></svg>
<svg style="left:983px;top:96px" width="17" height="19">
<rect x="1.5" y="1.5" width="4" height="4" fill="#fff" stroke="#1a1a1a" stroke-width="1"/>
<rect x="1.5" y="7.5" width="4" height="4" fill="#fff" stroke="#1a1a1a" stroke-width="1"/>
<rect x="1" y="13" width="5" height="5" fill="#4e4e4e"/>
<path d="M11.2 4Q15.6 6.3 15.3 10Q15 13.6 10.1 15.9Q12.7 12.6 12.5 9.9Q12.3 7.6 9.6 6.4Z" fill="#3c3c3c"/>
<path d="M8.7 2H14.9L8.7 7.7Z" fill="#3c3c3c"/></svg>
<svg style="left:982px;top:128px" width="18" height="15"><defs><linearGradient id="gpl" x1="0" y1="0" x2="1" y2="1"><stop offset="0" stop-color="#f4f4f4"/><stop offset="1" stop-color="#c8c8c8"/></linearGradient>
<linearGradient id="gtri" x1="0" y1="0" x2="1" y2="1"><stop offset="0" stop-color="#555"/><stop offset="1" stop-color="#222"/></linearGradient></defs>
<rect x="0.5" y="0.5" width="16" height="13" fill="url(#gpl)" stroke="#2a2a2a" stroke-width="1"/>
<path d="M4 2.8L14.5 7L4 11.3Z" fill="url(#gtri)"/></svg>
<svg style="left:981px;top:168px" width="20" height="21">
<path d="M1.5 4.5Q1 7.5 3.5 9.5Q5 10.8 6.5 12.5L7.3 11.8Q6.5 9.5 5.5 7Q4.2 4 1.5 4.5Z" fill="#333"/>
<path d="M8.3 1.5Q9 1 9.7 1.5V12H8.3Z" fill="#6a6a6a"/>
<path d="M18.2 6.2Q17.5 3.8 15 4Q12.5 4.5 13 7.3L10.8 12.2L11.8 12.6L14.8 8.8Q17.8 8.8 18.2 6.2Z" fill="#333"/>
<rect x="5.8" y="12" width="7.8" height="7.5" rx="1" fill="#111"/><rect x="7.6" y="14" width="4.4" height="4" fill="#f0f0f0"/></svg>
<svg style="left:981px;top:201px" width="19" height="18">
<path d="M1 1.5H2M1 4.5H2M1 7.5H2" stroke="#555" stroke-width="1.2"/>
<path d="M3.5 1.5H7M3.5 4.5H7M3.5 7.5H7" stroke="#222" stroke-width="1.3"/>
<circle cx="10" cy="3.6" r="3.1" fill="#333"/><circle cx="9.2" cy="2.7" r="1" fill="#888"/><rect x="9" y="6" width="2" height="4.5" fill="#333"/>
<path d="M2.5 12Q2.5 10.3 4.2 10.3H15.8Q17.5 10.3 17.5 12V15.3Q17.5 16.8 15.8 16.8H4.2Q2.5 16.8 2.5 15.3Z" fill="#f6f6f6" stroke="#1a1a1a" stroke-width="1.1"/>
<path d="M3 13H17" stroke="#1a1a1a" stroke-width="1"/><path d="M7.5 13.5H12.5L10 16.2Z" fill="#111"/></svg>
<div style="left:1010px;top:80px;width:192px;height:17px;background:linear-gradient(#a6a6a6,#929292)"></div>
<div style="left:1010px;top:96px;width:192px;height:1px;background:#6a6a6a"></div>
<div style="left:1010px;top:80px;width:48px;height:17px;background:linear-gradient(#ececec,#d8d8d8)"></div>
<div style="left:1058px;top:80px;width:1px;height:16px;background:#6e6e6e"></div>
<div style="left:1129px;top:80px;width:1px;height:16px;background:#6e6e6e"></div>
<div style="left:1130px;top:80px;width:1px;height:16px;background:#b8b8b8"></div>
<div style="left:1180px;top:80px;width:1px;height:16px;background:#6e6e6e"></div>
<div style="left:1181px;top:80px;width:1px;height:16px;background:#b8b8b8"></div>
<div style="left:1059px;top:80px;width:1px;height:16px;background:#b8b8b8"></div>
<span class="b" style="left:1016.1px;top:84px;font:normal bold 10px/10px 'Liberation Sans', sans-serif;color:#1e1e1e;transform:scaleX(0.9970);">COLOR</span>
<span class="b" style="left:1064.7px;top:84px;font:normal bold 10px/10px 'Liberation Sans', sans-serif;color:#1e1e1e;transform:scaleX(1.0424);">SWATCHES</span>
<span class="b" style="left:1136.6px;top:84px;font:normal bold 10px/10px 'Liberation Sans', sans-serif;color:#1e1e1e;transform:scaleX(0.9872);">STYLES</span>
<div style="left:1029px;top:118px;width:20px;height:20px;background:#fff;border:1px solid #8a8a8a;box-sizing:border-box"></div>
<div style="left:1017px;top:106px;width:20px;height:20px;background:#981717;border:2px solid #000;box-sizing:border-box;box-shadow:0 0 0 1px #e8e8e8"></div>
<span style="left:1053.3px;top:106px;font:normal normal 10px/10px 'Liberation Sans', sans-serif;color:#000;transform:scaleX(0.9000);">R</span>
<div style="left:1066px;top:108px;width:101px;height:6px;background:#7a7a7a"></div>
<div style="left:1067px;top:109px;width:99px;height:4px;background:linear-gradient(90deg,rgb(0,23,23),rgb(255,23,23))"></div>
<svg style="left:1122px;top:114px" width="10" height="9"><path d="M5 0.7L9.2 7.5Q9.2 8.5 8.2 8.5H1.8Q0.8 8.5 0.8 7.5Z" fill="#fff" stroke="#6a6a6a" stroke-width="1"/><path d="M1.6 6.4H8.4L8.7 7.8H1.3Z" fill="#2fa82f"/></svg>
<span style="left:1053.3px;top:129px;font:normal normal 10px/10px 'Liberation Sans', sans-serif;color:#000;transform:scaleX(0.9000);">G</span>
<div style="left:1066px;top:131px;width:101px;height:6px;background:#7a7a7a"></div>
<div style="left:1067px;top:132px;width:99px;height:4px;background:linear-gradient(90deg,rgb(152,0,23),rgb(152,255,23))"></div>
<svg style="left:1071px;top:137px" width="10" height="9"><path d="M5 0.7L9.2 7.5Q9.2 8.5 8.2 8.5H1.8Q0.8 8.5 0.8 7.5Z" fill="#fff" stroke="#6a6a6a" stroke-width="1"/><path d="M1.6 6.4H8.4L8.7 7.8H1.3Z" fill="#2fa82f"/></svg>
<span style="left:1053.3px;top:152px;font:normal normal 10px/10px 'Liberation Sans', sans-serif;color:#000;transform:scaleX(0.9745);">B</span>
<div style="left:1066px;top:154px;width:101px;height:6px;background:#7a7a7a"></div>
<div style="left:1067px;top:155px;width:99px;height:4px;background:linear-gradient(90deg,rgb(152,23,0),rgb(152,23,255))"></div>
<svg style="left:1071px;top:160px" width="10" height="9"><path d="M5 0.7L9.2 7.5Q9.2 8.5 8.2 8.5H1.8Q0.8 8.5 0.8 7.5Z" fill="#fff" stroke="#6a6a6a" stroke-width="1"/><path d="M1.6 6.4H8.4L8.7 7.8H1.3Z" fill="#2fa82f"/></svg>
<div style="left:1172px;top:104px;width:30px;height:18px;background:#fff;border-top:1px solid #a4a4a4;border-left:1px solid #c4c4c4;box-sizing:border-box"></div>
<span style="left:1178.4px;top:107px;font:normal normal 9.5px/9.5px 'Liberation Sans', sans-serif;color:#000;transform:scaleX(0.9465);">152</span>
<div style="left:1172px;top:126px;width:30px;height:18px;background:#fff;border-top:1px solid #a4a4a4;border-left:1px solid #c4c4c4;box-sizing:border-box"></div>
<span style="left:1178.4px;top:130px;font:normal normal 9.5px/9.5px 'Liberation Sans', sans-serif;color:#000;transform:scaleX(0.9465);">23</span>
<div style="left:1172px;top:149px;width:30px;height:18px;background:#fff;border-top:1px solid #a4a4a4;border-left:1px solid #c4c4c4;box-sizing:border-box"></div>
<span style="left:1178.4px;top:153px;font:normal normal 9.5px/9.5px 'Liberation Sans', sans-serif;color:#000;transform:scaleX(0.9465);">23</span>
<div style="left:1014px;top:175px;width:188px;height:17px;background:#9c9c9c"></div>
<svg style="left:1015px;top:176px" width="187" height="15"><defs>
<linearGradient id="spH" x1="0" y1="0" x2="1" y2="0">
<stop offset="0" stop-color="#f00000"/><stop offset="0.08" stop-color="#ff7000"/><stop offset="0.17" stop-color="#ffe600"/><stop offset="0.33" stop-color="#00a030"/><stop offset="0.5" stop-color="#00b4f0"/><stop offset="0.67" stop-color="#102080"/><stop offset="0.83" stop-color="#c00090"/><stop offset="1" stop-color="#f00030"/></linearGradient>
<linearGradient id="spV" x1="0" y1="0" x2="0" y2="1"><stop offset="0" stop-color="#fff" stop-opacity="0.92"/><stop offset="0.5" stop-color="#fff" stop-opacity="0"/><stop offset="0.5" stop-color="#000" stop-opacity="0"/><stop offset="1" stop-color="#000" stop-opacity="0.95"/></linearGradient></defs>
<rect x="0" y="0" width="187" height="15" fill="url(#spH)"/><rect x="0" y="0" width="187" height="15" fill="url(#spV)"/></svg>
<div style="left:1010px;top:195px;width:192px;height:3px;background:#3a3a3a"></div>
<div style="left:1010px;top:198px;width:192px;height:17px;background:linear-gradient(#a6a6a6,#929292)"></div>
<div style="left:1010px;top:214px;width:192px;height:1px;background:#6a6a6a"></div>
<div style="left:1010px;top:198px;width:52px;height:17px;background:linear-gradient(#ececec,#d8d8d8)"></div>
<div style="left:1062px;top:198px;width:1px;height:16px;background:#6e6e6e"></div>
<div style="left:1063px;top:198px;width:1px;height:16px;background:#b8b8b8"></div>
<div style="left:1130px;top:198px;width:1px;height:16px;background:#6e6e6e"></div>
<div style="left:1131px;top:198px;width:1px;height:16px;background:#b8b8b8"></div>
<div style="left:1180px;top:198px;width:1px;height:16px;background:#6e6e6e"></div>
<div style="left:1181px;top:198px;width:1px;height:16px;background:#b8b8b8"></div>
<span class="b" style="left:1016.4px;top:202px;font:normal bold 10px/10px 'Liberation Sans', sans-serif;color:#1e1e1e;transform:scaleX(0.9989);">LAYERS</span>
<span class="b" style="left:1069.2px;top:202px;font:normal bold 10px/10px 'Liberation Sans', sans-serif;color:#1e1e1e;transform:scaleX(0.9900);">CHANNELS</span>
<span class="b" style="left:1138.3px;top:202px;font:normal bold 10px/10px 'Liberation Sans', sans-serif;color:#1e1e1e;transform:scaleX(1.0985);">PATHS</span>
<div style="left:1014px;top:219px;width:130px;height:17.5px;background:#fff;border-top:1px solid #a8a8a8;box-sizing:border-box"></div>
<span style="left:1017.5px;top:223px;font:normal normal 10px/10px 'Liberation Sans', sans-serif;color:#000;transform:scaleX(0.9620);">Normal</span>
<svg style="left:1133px;top:227px" width="7" height="4"><path d="M0 0H7L3.5 4Z" fill="#000"/></svg>
<span style="left:1148px;top:223px;font:normal normal 10px/10px 'Liberation Sans', sans-serif;color:#000;transform:scaleX(1.0497);">Opacity:</span>
<div style="left:1189px;top:218px;width:13px;height:18px;background:#fff;border-top:1px solid #a4a4a4;border-left:1px solid #b4b4b4;box-sizing:border-box"></div>
<span style="left:1195.3px;top:224px;font:normal normal 10px/10px 'Liberation Sans', sans-serif;color:#000;transform:scaleX(0.9384);">100%</span>
<div style="left:1010px;top:239px;width:192px;height:1px;background:#a6a6a6"></div>
<div style="left:1010px;top:240px;width:192px;height:1px;background:#ececec"></div>
<span style="left:1017px;top:248px;font:normal normal 10px/10px 'Liberation Sans', sans-serif;color:#000;transform:scaleX(1.0669);">Lock:</span>
<span style="left:1171.6px;top:248px;font:normal normal 10px/10px 'Liberation Sans', sans-serif;color:#000;transform:scaleX(0.9388);">Fill:</span>
<div style="left:1189px;top:244px;width:13px;height:18px;background:#fff;border-top:1px solid #a4a4a4;border-left:1px solid #b4b4b4;box-sizing:border-box"></div>
<span style="left:1195.3px;top:250px;font:normal normal 10px/10px 'Liberation Sans', sans-serif;color:#000;transform:scaleX(0.9384);">100%</span>
<svg style="left:1049px;top:247px" width="12" height="12">
<rect x="0.5" y="0.5" width="10" height="10" fill="#fff" stroke="#555"/><rect x="1" y="1" width="3" height="3" fill="#c8c8c8"/><rect x="7" y="1" width="3" height="3" fill="#c8c8c8"/><rect x="4" y="4" width="3" height="3" fill="#c8c8c8"/><rect x="1" y="7" width="3" height="3" fill="#c8c8c8"/><rect x="7" y="7" width="3" height="3" fill="#c8c8c8"/></svg>
<svg style="left:1066px;top:246px" width="14" height="14">
<path d="M1.2 12.6Q1.8 9.6 4.8 7.2L10.6 2.2Q12.4 0.9 12.9 1.6Q13.3 2.6 11.8 4.2L6.6 9.8Q4.2 12.4 1.2 12.6Z" fill="#e6e6e6" stroke="#1e1e1e" stroke-width="0.9"/>
<path d="M3.5 9.5L9.5 4.2" stroke="#fff" stroke-width="1.3"/><path d="M10.3 3.6L12.3 1.8" stroke="#111" stroke-width="1.4"/></svg>
<svg style="left:1084px;top:246px" width="13" height="13">
<path d="M6.5 2V10.6M2 6.3H11" stroke="#111" stroke-width="1.5"/>
<path d="M6.5 0.3L4.3 3H8.7ZM6.5 12.4L4.3 9.6H8.7ZM0.3 6.3L3 4.1V8.5ZM12.7 6.3L10 4.1V8.5Z" fill="#111"/></svg>
<svg style="left:1103px;top:247px" width="11" height="12"><defs><linearGradient id="glk" x1="0" y1="0" x2="1" y2="0"><stop offset="0" stop-color="#222"/><stop offset="0.5" stop-color="#666"/><stop offset="1" stop-color="#111"/></linearGradient></defs>
<path d="M2.6 5V3.9Q2.6 1.1 5.5 1.1Q8.4 1.1 8.4 3.9V5" fill="none" stroke="#1a1a1a" stroke-width="1.5"/>
<rect x="1" y="4.3" width="9" height="6.8" fill="url(#glk)"/><rect x="1" y="10" width="9" height="1.1" fill="#000"/>
<path d="M1.6 6.3H3.2M7.8 6.3H9.4M1.6 8.3H3.2M7.8 8.3H9.4" stroke="#ddd" stroke-width="0.7"/>
<rect x="5" y="6.2" width="1.1" height="2.6" rx="0.5" fill="#000"/></svg>
<div style="left:1010px;top:265px;width:192px;height:1px;background:#a0a0a0"></div>
<div style="left:1033px;top:266px;width:1px;height:180px;background:#9a9a9a"></div>
<div style="left:1014px;top:277px;width:16px;height:16px;background:#d6d6d6;border:1px solid #ececec;border-top-color:#8e8e8e;border-left-color:#8e8e8e;box-sizing:border-box"></div>
<svg style="left:1014px;top:277px" width="16" height="16">
<path d="M2.2 5.6Q7.5 1.2 13.6 5.8" fill="none" stroke="#6a6a6a" stroke-width="1"/>
<path d="M2.4 6.4Q7.5 2.8 13.3 6.6Q14 8.6 12.4 9.8" fill="none" stroke="#222" stroke-width="1.2"/>
<circle cx="6.6" cy="7.3" r="3.1" fill="#000"/><circle cx="6.3" cy="7.6" r="0.8" fill="#fff"/>
<path d="M3 10.3Q7.5 12.6 12.6 9.4" fill="none" stroke="#1a1a1a" stroke-width="1.2"/></svg>
<div style="left:1037px;top:269px;width:32px;height:32px;background:#fff;border:1px solid #000;box-sizing:border-box"></div>
<svg style="left:1037px;top:269px" width="32" height="32"><text x="16.1" y="22" text-anchor="middle" font-family="Liberation Serif" font-size="19.5" fill="#000" style="filter:drop-shadow(0.5px 0.5px 0.6px rgba(0,0,0,.35))">T</text></svg>
<span style="left:1077.4px;top:282px;font:normal normal 10px/10px 'Liberation Sans', sans-serif;color:#000;transform:scaleX(1.0373);">I WANT TO DRAW A NU...</span>
<svg style="left:1052px;top:306px" width="16" height="16">
<path d="M2.2 5.6Q7.5 1.2 13.6 5.8" fill="none" stroke="#6a6a6a" stroke-width="1"/>
<path d="M2.4 6.4Q7.5 2.8 13.3 6.6Q14 8.6 12.4 9.8" fill="none" stroke="#222" stroke-width="1.2"/>
<circle cx="6.6" cy="7.3" r="3.1" fill="#000"/><circle cx="6.3" cy="7.6" r="0.8" fill="#fff"/>
<path d="M3 10.3Q7.5 12.6 12.6 9.4" fill="none" stroke="#1a1a1a" stroke-width="1.2"/></svg>
<span style="left:1071.3px;top:309px;font:normal normal 10px/10px 'Liberation Sans', sans-serif;color:#000;transform:scaleX(0.9610);">Effects</span>
<div style="left:1067px;top:324px;width:135px;height:1px;background:#9a9a9a"></div>
<div style="left:1067px;top:325px;width:135px;height:1px;background:#ececec"></div>
<span style="left:1089px;top:328px;font:normal normal 10px/10px 'Liberation Sans', sans-serif;color:#000;transform:scaleX(1.0381);">Stroke</span>
<div style="left:1010px;top:342px;width:192px;height:1px;background:#9a9a9a"></div>
<div style="left:1034px;top:343px;width:168px;height:32px;background:#3a97f4"></div>
<div style="left:1014px;top:350px;width:16px;height:16px;background:#d6d6d6;border:1px solid #ececec;border-top-color:#8e8e8e;border-left-color:#8e8e8e;box-sizing:border-box"></div>
<svg style="left:1014px;top:350px" width="16" height="16">
<path d="M2.2 5.6Q7.5 1.2 13.6 5.8" fill="none" stroke="#6a6a6a" stroke-width="1"/>
<path d="M2.4 6.4Q7.5 2.8 13.3 6.6Q14 8.6 12.4 9.8" fill="none" stroke="#222" stroke-width="1.2"/>
<circle cx="6.6" cy="7.3" r="3.1" fill="#000"/><circle cx="6.3" cy="7.6" r="0.8" fill="#fff"/>
<path d="M3 10.3Q7.5 12.6 12.6 9.4" fill="none" stroke="#1a1a1a" stroke-width="1.2"/></svg>
<svg style="left:1035px;top:344px" width="36" height="29">
<rect x="1" y="1" width="34" height="27" fill="#fff"/>
<svg x="3" y="3" width="30" height="23"><g transform="translate(-3,-3)"><rect x="3" y="7" width="4" height="4" fill="#cdcdcd"/><rect x="3" y="15" width="4" height="4" fill="#cdcdcd"/><rect x="3" y="23" width="4" height="4" fill="#cdcdcd"/><rect x="7" y="3" width="4" height="4" fill="#cdcdcd"/><rect x="7" y="11" width="4" height="4" fill="#cdcdcd"/><rect x="7" y="19" width="4" height="4" fill="#cdcdcd"/><rect x="11" y="7" width="4" height="4" fill="#cdcdcd"/><rect x="11" y="15" width="4" height="4" fill="#cdcdcd"/><rect x="11" y="23" width="4" height="4" fill="#cdcdcd"/><rect x="15" y="3" width="4" height="4" fill="#cdcdcd"/><rect x="15" y="11" width="4" height="4" fill="#cdcdcd"/><rect x="15" y="19" width="4" height="4" fill="#cdcdcd"/><rect x="19" y="7" width="4" height="4" fill="#cdcdcd"/><rect x="19" y="15" width="4" height="4" fill="#cdcdcd"/><rect x="19" y="23" width="4" height="4" fill="#cdcdcd"/><rect x="23" y="3" width="4" height="4" fill="#cdcdcd"/><rect x="23" y="11" width="4" height="4" fill="#cdcdcd"/><rect x="23" y="19" width="4" height="4" fill="#cdcdcd"/><rect x="27" y="7" width="4" height="4" fill="#cdcdcd"/><rect x="27" y="15" width="4" height="4" fill="#cdcdcd"/><rect x="27" y="23" width="4" height="4" fill="#cdcdcd"/><rect x="31" y="3" width="4" height="4" fill="#cdcdcd"/><rect x="31" y="11" width="4" height="4" fill="#cdcdcd"/><rect x="31" y="19" width="4" height="4" fill="#cdcdcd"/></g></svg>
<rect x="2.5" y="2.5" width="31" height="24" fill="none" stroke="#000" stroke-width="1"/>
<path d="M0.5 8.5V0.5H12M24 0.5H35.5V8.5M35.5 20.5V28.5H24M12 28.5H0.5V20.5" fill="none" stroke="#000" stroke-width="1"/>
<path d="M17.5 14.8Q19.5 14 22 14.6Q20 15.8 18.6 18.8" fill="none" stroke="#b84848" stroke-width="1"/></svg>
<span class="b" style="left:1077.5px;top:355px;font:normal bold 10px/10px 'Liberation Sans', sans-serif;color:#ffffff;transform:scaleX(1.0850);">Layer 1</span>
<svg style="left:1052px;top:376px" width="16" height="16">
<path d="M2.2 5.6Q7.5 1.2 13.6 5.8" fill="none" stroke="#6a6a6a" stroke-width="1"/>
<path d="M2.4 6.4Q7.5 2.8 13.3 6.6Q14 8.6 12.4 9.8" fill="none" stroke="#222" stroke-width="1.2"/>
<circle cx="6.6" cy="7.3" r="3.1" fill="#000"/><circle cx="6.3" cy="7.6" r="0.8" fill="#fff"/>
<path d="M3 10.3Q7.5 12.6 12.6 9.4" fill="none" stroke="#1a1a1a" stroke-width="1.2"/></svg>
<span style="left:1071.3px;top:379px;font:normal normal 10px/10px 'Liberation Sans', sans-serif;color:#000;transform:scaleX(0.9610);">Effects</span>
<div style="left:1067px;top:394px;width:135px;height:1px;background:#9a9a9a"></div>
<div style="left:1067px;top:395px;width:135px;height:1px;background:#ececec"></div>
<svg style="left:1070px;top:395px" width="16" height="16">
<path d="M2.2 5.6Q7.5 1.2 13.6 5.8" fill="none" stroke="#6a6a6a" stroke-width="1"/>
<path d="M2.4 6.4Q7.5 2.8 13.3 6.6Q14 8.6 12.4 9.8" fill="none" stroke="#222" stroke-width="1.2"/>
<circle cx="6.6" cy="7.3" r="3.1" fill="#000"/><circle cx="6.3" cy="7.6" r="0.8" fill="#fff"/>
<path d="M3 10.3Q7.5 12.6 12.6 9.4" fill="none" stroke="#1a1a1a" stroke-width="1.2"/></svg>
<span style="left:1089.3px;top:398px;font:normal normal 10px/10px 'Liberation Sans', sans-serif;color:#000;transform:scaleX(1.0381);">Stroke</span>
<div style="left:1010px;top:412px;width:192px;height:1px;background:#9a9a9a"></div>
<div style="left:1014px;top:420px;width:16px;height:16px;background:#d6d6d6;border:1px solid #ececec;border-top-color:#8e8e8e;border-left-color:#8e8e8e;box-sizing:border-box"></div>
<svg style="left:1014px;top:420px" width="16" height="16">
<path d="M2.2 5.6Q7.5 1.2 13.6 5.8" fill="none" stroke="#6a6a6a" stroke-width="1"/>
<path d="M2.4 6.4Q7.5 2.8 13.3 6.6Q14 8.6 12.4 9.8" fill="none" stroke="#222" stroke-width="1.2"/>
<circle cx="6.6" cy="7.3" r="3.1" fill="#000"/><circle cx="6.3" cy="7.6" r="0.8" fill="#fff"/>
<path d="M3 10.3Q7.5 12.6 12.6 9.4" fill="none" stroke="#1a1a1a" stroke-width="1.2"/></svg>
<div style="left:1037px;top:416px;width:32px;height:25px;background:#fff;border:1px solid #000;box-sizing:border-box"></div>
<span style="left:1078.2px;top:425px;font:italic normal 10px/10px 'Liberation Sans', sans-serif;color:#000;transform:scaleX(1.0400);">Background</span>
<div style="left:1010px;top:445px;width:192px;height:1px;background:#9a9a9a"></div>
</body></html>
